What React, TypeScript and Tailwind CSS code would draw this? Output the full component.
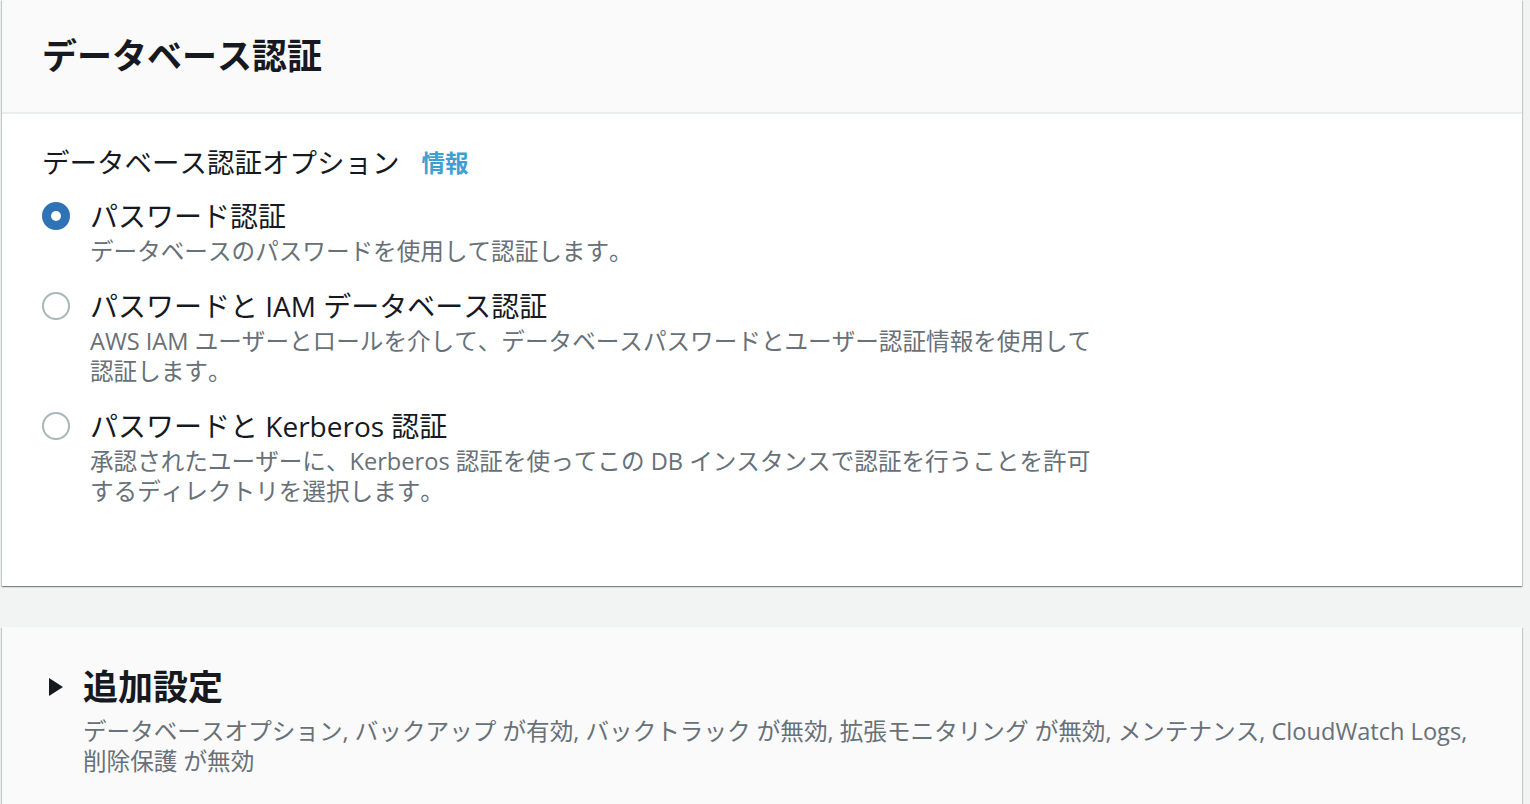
import React from "react";

type Option = {
  id: string;
  label: React.ReactNode;
  lines: string[];
};

const options: Option[] = [
  {
    id: "password",
    label: "パスワード認証",
    lines: ["データベースのパスワードを使用して認証します。"],
  },
  {
    id: "iam",
    label: "パスワードと IAM データベース認証",
    lines: [
      "AWS IAM ユーザーとロールを介して、データベースパスワードとユーザー認証情報を使用して",
      "認証します。",
    ],
  },
  {
    id: "kerberos",
    label: "パスワードと Kerberos 認証",
    lines: [
      "承認されたユーザーに、Kerberos 認証を使ってこの DB インスタンスで認証を行うことを許可",
      "するディレクトリを選択します。",
    ],
  },
];

const cardShadow =
  "shadow-[0_1px_1px_0_rgba(0,28,36,0.3),1px_1px_1px_0_rgba(0,28,36,0.15),-1px_1px_1px_0_rgba(0,28,36,0.15)]";

const Radio = ({ checked }: { checked: boolean }) =>
  checked ? (
    <span className="block w-7 h-7 rounded-full border-[9px] border-[#2f73b7] bg-white" />
  ) : (
    <span className="block w-7 h-7 rounded-full border-2 border-[#aab7b8] bg-white" />
  );

const App = () => {
  const selected = "password";

  return (
    <div className="h-[804px] overflow-hidden bg-[#f2f3f3] pl-[2px] pr-[8px] font-['Open_Sans','Noto_Sans_CJK_JP',sans-serif] [font-kerning:none] text-[#16191f]">
      <section className={`bg-white ${cardShadow}`}>
        <header className="h-[114px] px-[40px] flex items-center bg-[#fafafa] border-b-2 border-[#eaeded]">
          <h2 className="text-[35px] leading-[44px] font-bold">
            データベース認証
          </h2>
        </header>

        <div className="px-[40px] pt-[32px] pb-[80px]">
          <div className="flex items-center text-[27.5px] leading-[34px]">
            <span>データベース認証オプション</span>
            <a className="ml-[22px] text-[23.5px] font-bold text-[#3f9fd0]">
              情報
            </a>
          </div>

          <div className="mt-[18px] flex flex-col gap-[22px]">
            {options.map((o) => (
              <label key={o.id} className="flex items-start gap-[20px]">
                <span className="pt-[4px]">
                  <Radio checked={o.id === selected} />
                </span>
                <span className="flex flex-col">
                  <span className="text-[28px] leading-[36px]">{o.label}</span>
                  <span className="mt-[2px] text-[23.6px] leading-[30px] text-[#687078]">
                    {o.lines.map((l) => (
                      <span key={l} className="block whitespace-nowrap">
                        {l}
                      </span>
                    ))}
                  </span>
                </span>
              </label>
            ))}
          </div>
        </div>
      </section>

      <section className={`mt-[41px] bg-[#fafafa] ${cardShadow} px-[46px] pt-[38px] pb-[60px]`}>
        <div className="flex items-center gap-[19px]">
          <svg width="16" height="18" viewBox="0 0 16 18" className="shrink-0">
            <path d="M1 0 L15 9 L1 18 Z" fill="#16191f" />
          </svg>
          <h2 className="text-[35px] leading-[44px] font-bold">追加設定</h2>
        </div>
        <div className="mt-[7px] pl-[35px] text-[23.6px] leading-[30px] text-[#687078]">
          <span className="block whitespace-nowrap">
            データベースオプション, バックアップ が有効, バックトラック が無効, 拡張モニタリング が無効, メンテナンス, CloudWatch Logs,
          </span>
          <span className="block whitespace-nowrap">削除保護 が無効</span>
        </div>
      </section>
    </div>
  );
};

export default App;
